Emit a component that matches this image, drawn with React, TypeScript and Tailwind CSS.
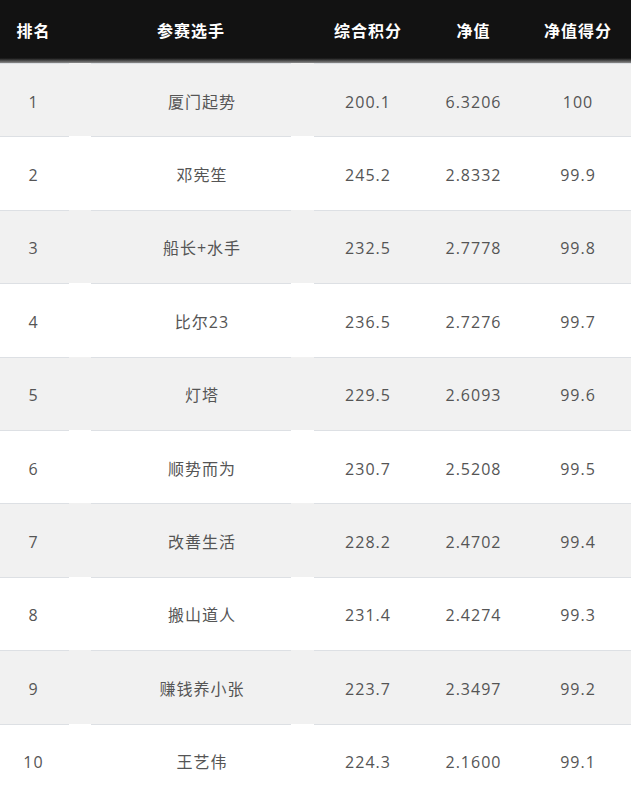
import React from 'react';

interface Row {
  rank: number;
  name: string;
  score: string;
  nav: string;
  navScore: string;
}

const rows: Row[] = [
  { rank: 1, name: '厦门起势', score: '200.1', nav: '6.3206', navScore: '100' },
  { rank: 2, name: '邓宪笙', score: '245.2', nav: '2.8332', navScore: '99.9' },
  { rank: 3, name: '船长+水手', score: '232.5', nav: '2.7778', navScore: '99.8' },
  { rank: 4, name: '比尔23', score: '236.5', nav: '2.7276', navScore: '99.7' },
  { rank: 5, name: '灯塔', score: '229.5', nav: '2.6093', navScore: '99.6' },
  { rank: 6, name: '顺势而为', score: '230.7', nav: '2.5208', navScore: '99.5' },
  { rank: 7, name: '改善生活', score: '228.2', nav: '2.4702', navScore: '99.4' },
  { rank: 8, name: '搬山道人', score: '231.4', nav: '2.4274', navScore: '99.3' },
  { rank: 9, name: '赚钱养小张', score: '223.7', nav: '2.3497', navScore: '99.2' },
  { rank: 10, name: '王艺伟', score: '224.3', nav: '2.1600', navScore: '99.1' },
];

const font = "font-['Open_Sans','Noto_Sans_CJK_SC',sans-serif]";

export default function App() {
  return (
    <div className={`w-[631px] h-[798px] overflow-hidden bg-white ${font}`}>
      <div className="bg-[#121212]">
        <div className="h-[58px] pt-[4px] flex items-center text-white font-bold text-[16px] tracking-[1px]">
          <div className="w-[67px] text-center">排名</div>
          <div className="w-[24px]" />
          <div className="w-[200px] text-center">参赛选手</div>
          <div className="w-[23px]" />
          <div className="w-[108px] text-center">综合积分</div>
          <div className="w-[103px] text-center">净值</div>
          <div className="w-[106px] text-center">净值得分</div>
        </div>
        <div className="h-[5px] bg-gradient-to-b from-[#121212] to-[#8c8c8c]" />
      </div>
      {rows.map((r, i) => {
        const bg = i % 2 === 0 ? 'bg-[#f1f1f1]' : 'bg-white';
        return (
          <div key={r.rank} className={`h-[73.4px] flex text-[16px] tracking-[1px] text-[#555] ${bg}`}>
            <div className="w-[69px] pr-[2px] pt-[3px] border-t border-[#dde0e4] flex items-center justify-center">{r.rank}</div>
            <div className="w-[22px]" />
            <div className="w-[200px] pl-[22px] pt-[3px] border-t border-[#dde0e4] flex items-center justify-center">{r.name}</div>
            <div className="w-[23px]" />
            <div className="flex-1 flex pt-[3px] border-t border-[#dde0e4]">
              <div className="w-[108px] flex items-center justify-center">{r.score}</div>
              <div className="w-[103px] flex items-center justify-center">{r.nav}</div>
              <div className="w-[106px] flex items-center justify-center">{r.navScore}</div>
            </div>
          </div>
        );
      })}
    </div>
  );
}
